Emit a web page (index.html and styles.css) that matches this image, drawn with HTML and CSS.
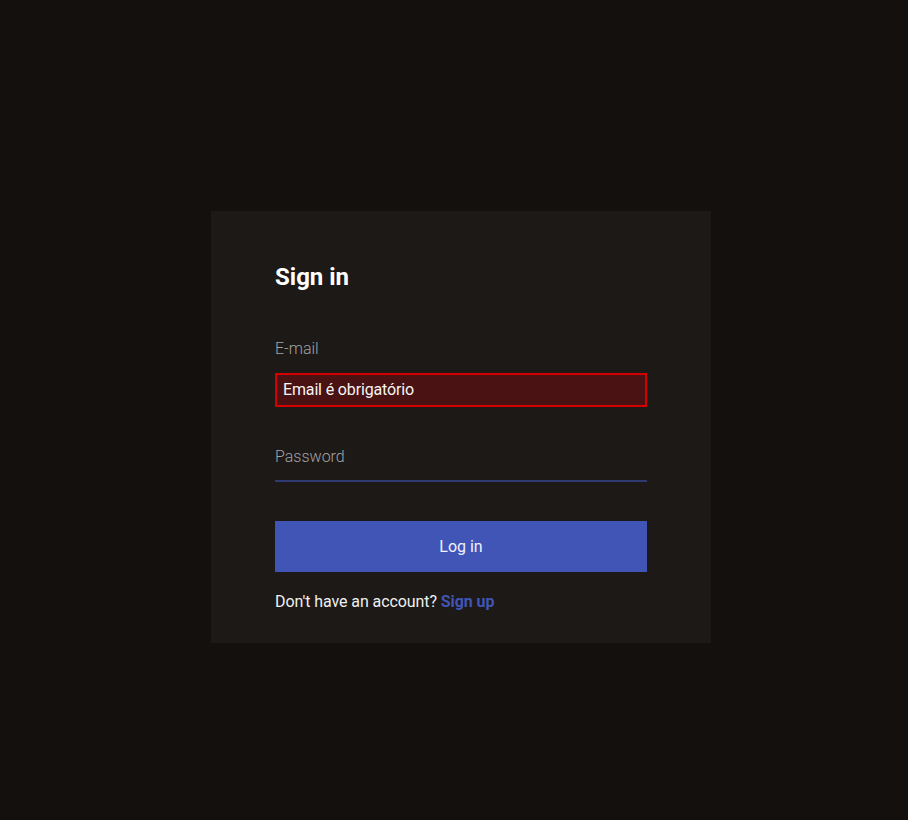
FILE: index.html
```html
<!DOCTYPE html>
<html lang="en">
<head>
<meta charset="utf-8">
<title>Sign in</title>
<link rel="stylesheet" href="styles.css">
</head>
<body>
<main class="page">
  <form class="card">
    <h1 class="title">Sign in</h1>
    <label class="label" for="email">E-mail</label>
    <div class="error-field" id="email">Email é obrigatório</div>
    <div class="password-field">Password</div>
    <button type="button" class="btn">Log in</button>
    <p class="footer">Don't have an account? <a href="#" class="link">Sign up</a></p>
  </form>
</main>
</body>
</html>
```
FILE: styles.css
```css
html, body {
  margin: 0;
  padding: 0;
  background: #13100e;
  height: 100%;
}
body {
  font-family: Roboto, "Liberation Sans", sans-serif;
  color: #fff;
}
.page {
  padding: 211px 0 0 211px;
}
.card {
  width: 500px;
  box-sizing: border-box;
  background: #1c1917;
  padding: 50px 64px 29px;
  display: flex;
  flex-direction: column;
}
.title {
  margin: 0;
  font-size: 24px;
  line-height: 32px;
  font-weight: 700;
  color: #fff;
}
.label {
  margin-top: 44px;
  font-size: 16px;
  line-height: 24px;
  font-weight: 300;
  color: #a3a3a3;
}
.error-field {
  margin-top: 12px;
  height: 34px;
  box-sizing: border-box;
  border: 2px solid #d40000;
  background: #4a1212;
  padding: 0 6px;
  font-size: 16px;
  line-height: 30px;
  letter-spacing: -0.15px;
  color: #f5f5f5;
}
.password-field {
  margin-top: 38px;
  font-size: 16px;
  line-height: 24px;
  font-weight: 300;
  color: #a3a3a3;
  padding-bottom: 11px;
  border-bottom: 2px solid #2f3a73;
}
.btn {
  margin-top: 39px;
  height: 51px;
  border: none;
  background: #4055b5;
  color: #f0f0ff;
  font-family: inherit;
  font-size: 16px;
  cursor: pointer;
}
.footer {
  margin: 18px 0 0;
  font-size: 16px;
  line-height: 24px;
  letter-spacing: -0.08px;
  color: #f0f0f0;
}
.link {
  color: #4055b5;
  font-weight: 700;
  text-decoration: none;
}
```
